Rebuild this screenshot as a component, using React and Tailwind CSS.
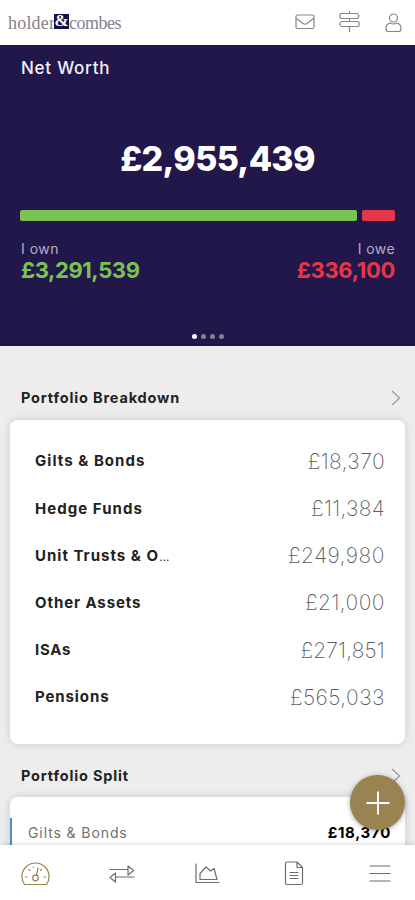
import React from 'react';

const holdings = [
  { name: 'Gilts & Bonds', value: '£18,370', nameStyle: 'tracking-[1.04px]', valueStyle: 'tracking-[0.4px]' },
  { name: 'Hedge Funds', value: '£11,384', nameStyle: 'tracking-[1.04px]', valueStyle: 'tracking-[0.3px]' },
  { name: 'Unit Trusts & O', cut: true, value: '£249,980', nameStyle: 'tracking-[1px]', valueStyle: 'tracking-[0.5px]' },
  { name: 'Other Assets', value: '£21,000', nameStyle: 'tracking-[0.9px]', valueStyle: 'tracking-[0.45px]' },
  { name: 'ISAs', value: '£271,851', nameStyle: 'tracking-[0.7px]', valueStyle: 'tracking-[0.15px]' },
  { name: 'Pensions', value: '£565,033', nameStyle: 'tracking-[0.9px]', valueStyle: 'tracking-[0.45px]' },
];

const Logo = () => (
  <div className="flex h-4 items-center font-['Liberation_Serif',serif] text-[18px] leading-4 text-[#85828c]">
    <span className="w-[46px] tracking-[0.2px]">holder</span>
    <span className="-mt-[3px] flex h-[15px] w-[15px] items-center justify-center bg-[#17124a] text-[17px] font-bold text-white">&amp;</span>
    <span className="tracking-[-0.5px]">combes</span>
  </div>
);

const Header = () => (
  <header className="flex h-[45px] shrink-0 items-center justify-between bg-white pl-2 pr-3">
    <Logo />
    <svg width="108" height="24" viewBox="0 0 108 24" fill="none" stroke="#858585" strokeWidth="1.2" strokeLinejoin="round">
      {/* mail */}
      <rect x="1" y="4" width="18" height="13.500" rx="1.5" />
      <path d="M1.5 7.500 8 12.500q2 1.300 4 0L18.500 7.500" />
      {/* signpost */}
      <path d="M54.500 0v2M54.500 8v3M54.500 16v5" />
      <path d="M46 2.500h16.500l1.500 2.500-1.500 2.500H46q-1 0-1-1v-3q0-1 1-1zM63 10.500H46.500L44.500 13l2 2.500H63q1 0 1-1v-3q0-1-1-1z" />
      {/* profile */}
      <circle cx="98.500" cy="7" r="4" />
      <path d="M95 12q-4 1-4 5.500 0 3 2 3h11q2 0 2-3Q106 13 102 12q-3.500 2-7 0z" />
    </svg>
  </header>
);

const NetWorth = () => (
  <section className="flex h-[301px] shrink-0 flex-col bg-[#21174b] px-5">
    <h1 className="ml-px mt-[13px] text-[17px] font-medium leading-5 tracking-[0.75px] text-[#f1eff6]">Net Worth</h1>
    <p className="ml-[20px] mt-[61px] self-center text-[34px] font-extrabold leading-10 tracking-[-0.7px] text-white">£2,955,439</p>
    <div className="mt-[31px] flex h-[11px] gap-[5px]">
      <div className="w-[337px] rounded-[2px] bg-[#7bc252]" />
      <div className="w-[33px] rounded-[2px] bg-[#e63748]" />
    </div>
    <div className="mt-[20px] flex justify-between">
      <div className="pl-px">
        <p className="text-[14px] leading-4 tracking-[0.5px] text-[#b2adc5]">I own</p>
        <p className="mt-px text-[22px] font-bold leading-6 tracking-[-0.4px] text-[#7bc252]">£3,291,539</p>
      </div>
      <div className="text-right">
        <p className="text-[14px] leading-4 tracking-[0.4px] text-[#b2adc5]">I owe</p>
        <p className="mt-px text-[22px] font-bold leading-6 tracking-[-0.3px] text-[#e63748]">£336,100</p>
      </div>
    </div>
    <div className="mt-[52px] flex justify-center gap-[4px]">
      <i className="h-[5px] w-[5px] rounded-full bg-white" />
      <i className="h-[5px] w-[5px] rounded-full bg-[#837d93]" />
      <i className="h-[5px] w-[5px] rounded-full bg-[#837d93]" />
      <i className="h-[5px] w-[5px] rounded-full bg-[#837d93]" />
    </div>
  </section>
);

const SectionTitle = ({ children }) => (
  <div className="flex h-5 items-center justify-between pl-[21px] pr-[14px]">
    <h2 className="text-[14.5px] font-bold leading-5 tracking-[0.83px]">{children}</h2>
    <svg width="10" height="16" viewBox="0 0 10 16" fill="none" stroke="#9a9a9a" strokeWidth="1.3">
      <path d="m1 1 7.500 7L1 15" />
    </svg>
  </div>
);

const BottomNav = () => (
  <nav className="relative z-10 flex h-[55px] shrink-0 items-center bg-white shadow-[0_-1px_4px_rgba(0,0,0,0.15)]">
    <svg width="415" height="55" viewBox="0 0 415 55" fill="none" stroke="#6d6d6d" strokeWidth="1.2" strokeLinejoin="round" strokeLinecap="round">
      {/* dashboard gauge */}
      <g stroke="#988351">
        <path d="M24.500 39.500Q22 36 22 31.500a13.500 13.500 0 0 1 27 0q0 4.500-2.500 8z" />
        <circle cx="35.500" cy="33" r="2.800" />
        <path d="m36.500 30 1.500-7M25.500 32h1.500M44 32h1.500M29 24.500l.8.800M33 22h.5M41.500 24.500l-.8.800" />
      </g>
      {/* transfers */}
      <path d="M110 24.500h18v-3.500l5.500 4.500-5.500 4.500v-5.500M134 32h-18.500v-4l-5.500 4.500 5.500 4.500v-5" />
      {/* area chart */}
      <path d="M196 19v18.500h23M200 34.500v-6l6-6.500 4.500 4 3.500-2.500 3 11z" />
      {/* document */}
      <path d="M285.500 38V18.500q0-1.500 1.500-1.500h10l5.500 5.500V38q0 1.500-1.500 1.500h-14q-1.500 0-1.500-1.500zM297 17v5.500h5.500M290 27.500h8M290 30.500h8M290 33.500h8" />
      {/* menu */}
      <path d="M370 21h20M370 28.500h20M370 36h20" />
    </svg>
  </nav>
);

const App = () => {
  return (
    <div className="relative flex h-[900px] w-[415px] flex-col overflow-hidden bg-[#ededed] font-[Inter,'Liberation_Sans',sans-serif] text-[#222]">
      <Header />
      <NetWorth />

      <main className="min-h-0 flex-1 overflow-hidden pt-[42px]">
        <SectionTitle>Portfolio Breakdown</SectionTitle>
        <div className="mx-[10px] mt-3 h-[324px] rounded-lg bg-white pl-[25px] pr-5 pt-[18px] shadow-[0_0_8px_rgba(0,0,0,0.15)]">
          {holdings.map((item) => (
            <div key={item.name} className="flex h-[47.200px] items-center justify-between">
              <span className={`text-[15px] font-bold ${item.nameStyle}`}>
                {item.name}
                {item.cut && <span className="text-[14px] font-light tracking-[-0.5px]">...</span>}
              </span>
              <span className={`text-[21px] font-extralight text-[#5c5c5c] ${item.valueStyle}`}>{item.value}</span>
            </div>
          ))}
        </div>

        <div className="mt-[22px]">
          <SectionTitle>Portfolio Split</SectionTitle>
        </div>
        <div className="mx-[10px] mt-[11px] h-[80px] rounded-t-lg bg-white pt-[21px] shadow-[0_0_8px_rgba(0,0,0,0.15)]">
          <div className="flex h-[50px] justify-between border-l-2 border-[#4b8dcf] pl-[16px] pr-[14px] pt-[5px]">
            <span className="text-[14px] leading-5 tracking-[0.9px] text-[#707070]">Gilts &amp; Bonds</span>
            <span className="text-[15px] font-bold leading-5 tracking-[0.7px] text-black">£18,370</span>
          </div>
        </div>
      </main>

      <BottomNav />

      {/* Add button */}
      <button className="absolute bottom-[70px] right-[10px] z-20 flex h-[55px] w-[55px] items-center justify-center rounded-full bg-[#988351] shadow-[0_1px_5px_rgba(0,0,0,0.35)]">
        <svg width="24" height="24" viewBox="0 0 24 24" stroke="white" strokeWidth="2">
          <path d="M12 0.500v23M0.500 12h23" />
        </svg>
      </button>
    </div>
  );
};

export default App;
